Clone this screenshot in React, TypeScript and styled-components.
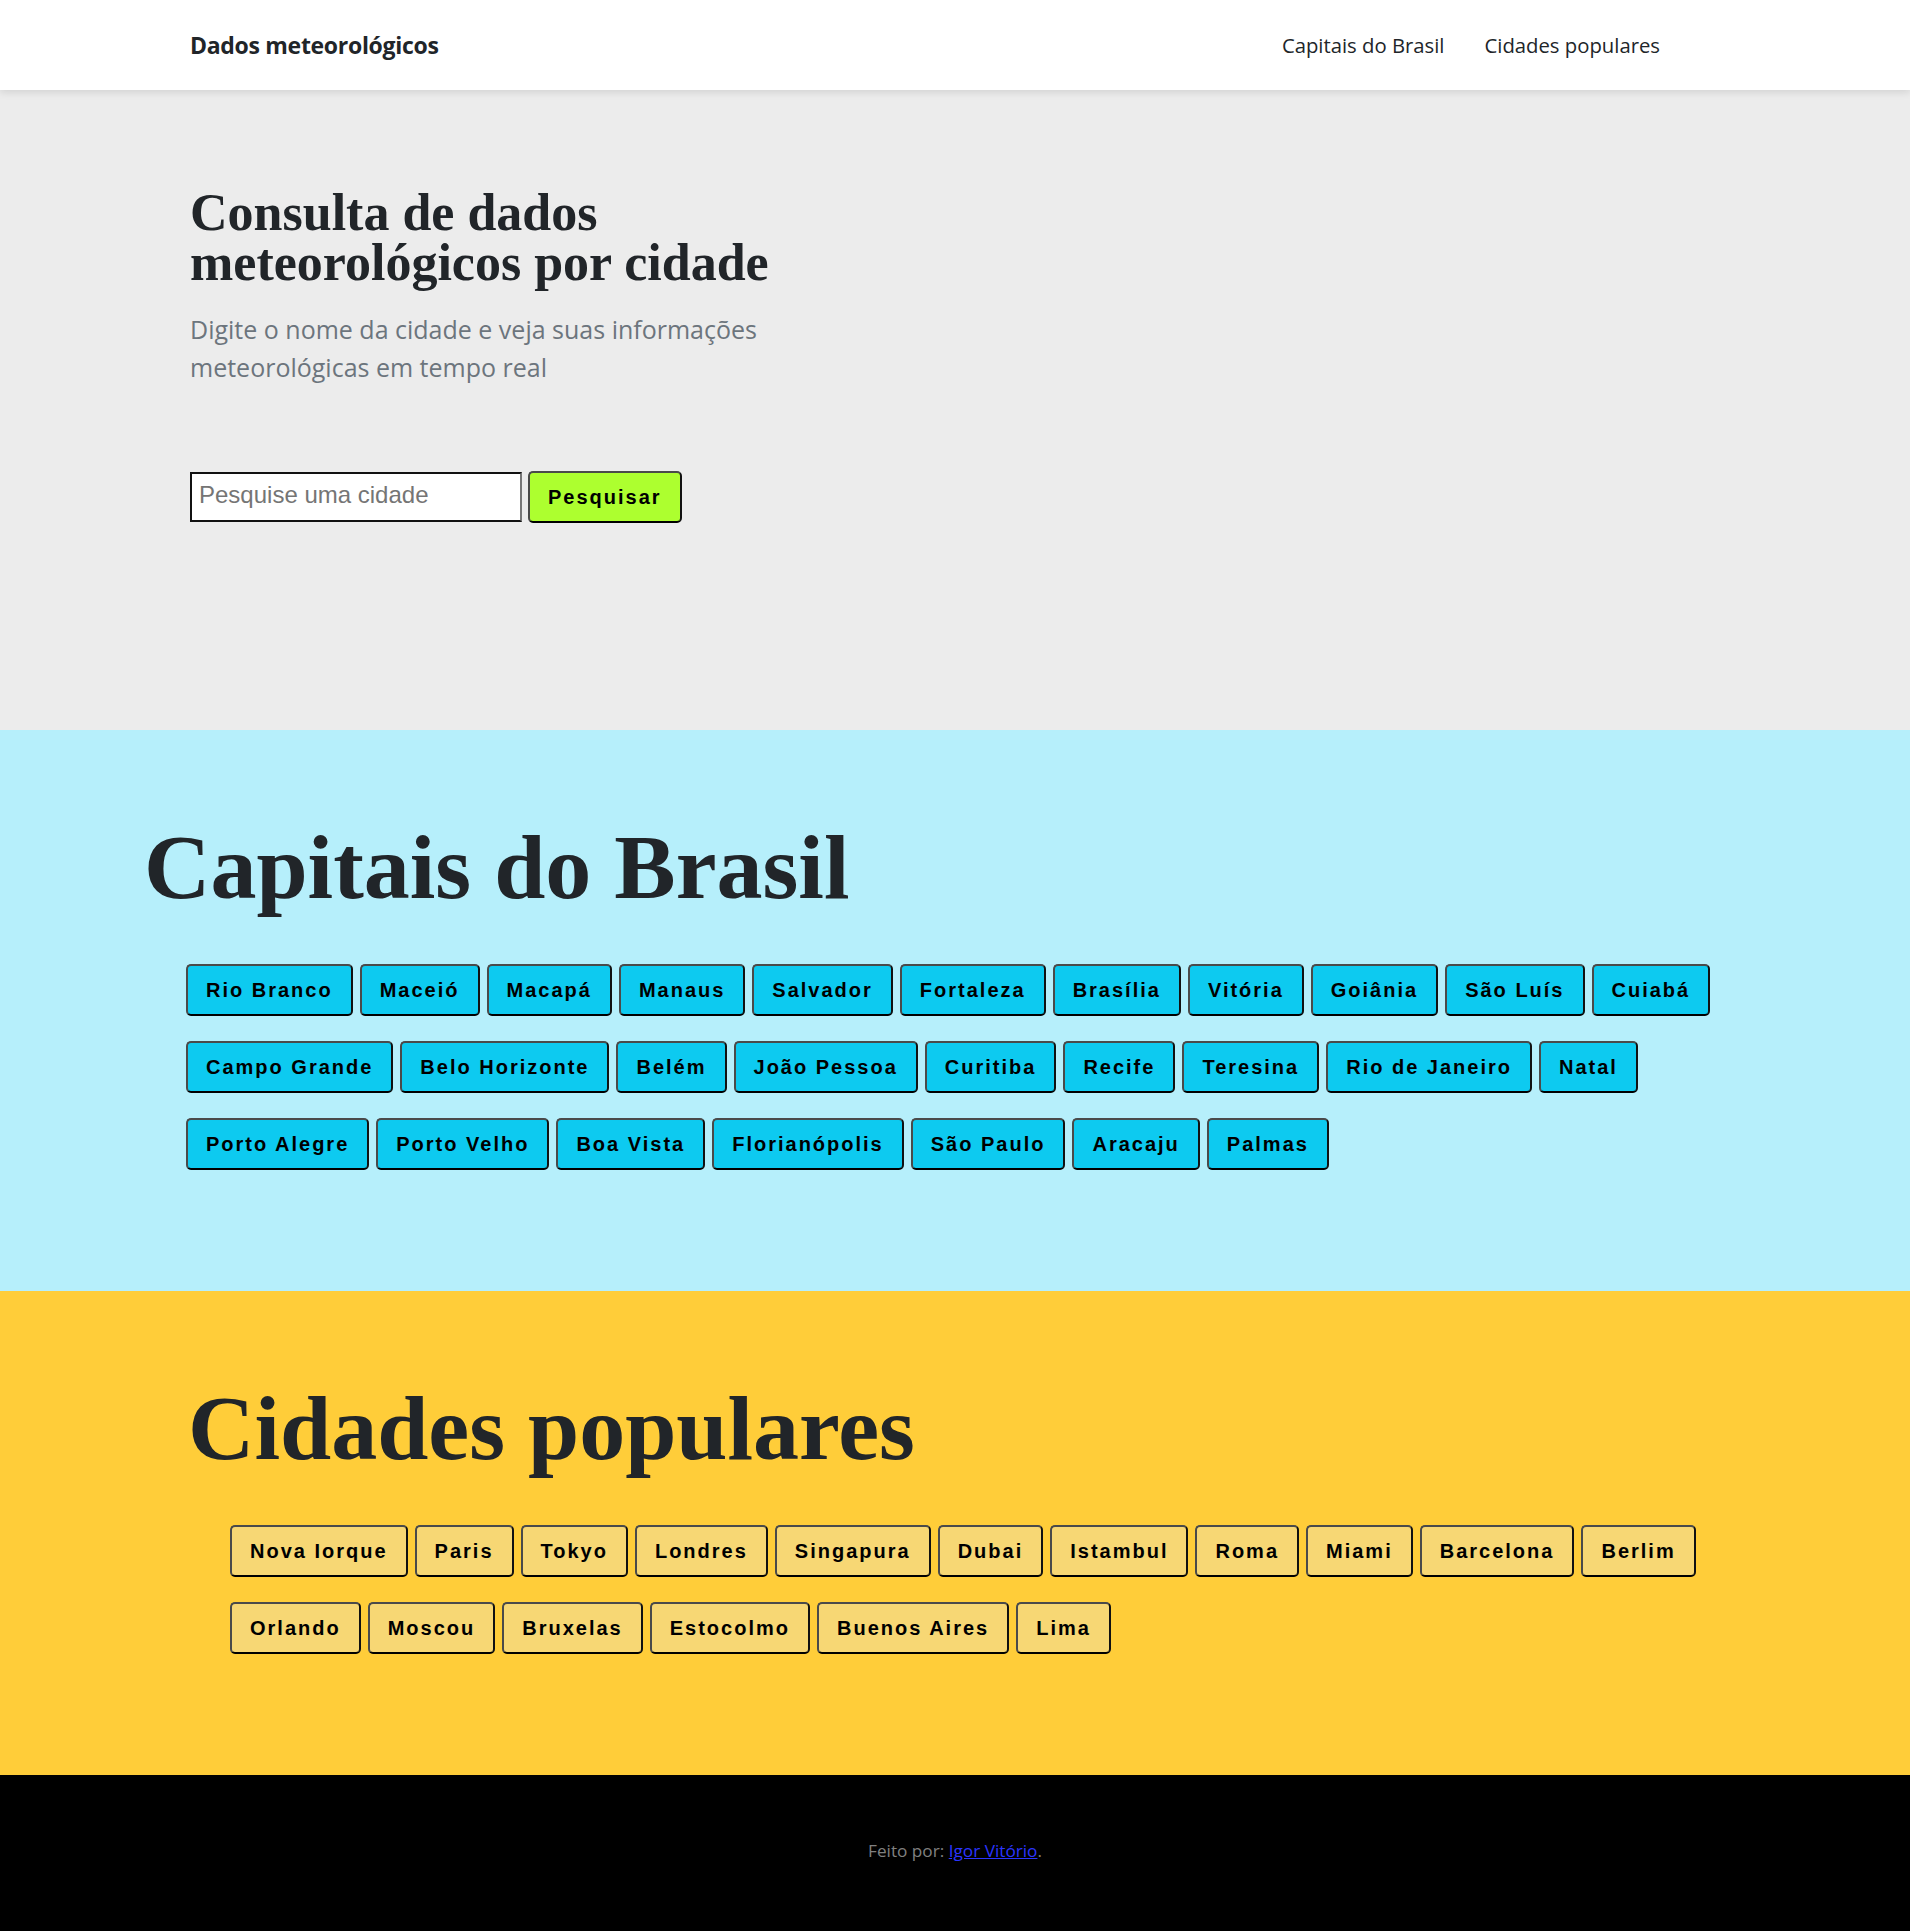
import styled, { createGlobalStyle } from 'styled-components';

const GlobalStyle = createGlobalStyle`
  * {
    box-sizing: border-box;
  }
  body {
    margin: 0;
    font-family: 'Open Sans', 'Noto Sans', sans-serif;
    color: #212529;
    background: #ffffff;
  }
`;

const capitais = [
  'Rio Branco', 'Maceió', 'Macapá', 'Manaus', 'Salvador', 'Fortaleza', 'Brasília', 'Vitória',
  'Goiânia', 'São Luís', 'Cuiabá', 'Campo Grande', 'Belo Horizonte', 'Belém', 'João Pessoa',
  'Curitiba', 'Recife', 'Teresina', 'Rio de Janeiro', 'Natal', 'Porto Alegre', 'Porto Velho',
  'Boa Vista', 'Florianópolis', 'São Paulo', 'Aracaju', 'Palmas',
];

const populares = [
  'Nova Iorque', 'Paris', 'Tokyo', 'Londres', 'Singapura', 'Dubai', 'Istambul', 'Roma', 'Miami',
  'Barcelona', 'Berlim', 'Orlando', 'Moscou', 'Bruxelas', 'Estocolmo', 'Buenos Aires', 'Lima',
];

const Navbar = styled.nav`
  height: 90px;
  background: #ffffff;
  box-shadow: 0 2px 8px rgba(0, 0, 0, 0.12);
  display: flex;
  align-items: center;
  justify-content: space-between;
  padding: 0 250px 0 190px;
  position: relative;
  z-index: 1;
`;

const Brand = styled.a`
  font-size: 23px;
  font-weight: 700;
  color: #212529;
  text-decoration: none;
  letter-spacing: -0.3px;
`;

const NavLinks = styled.div`
  display: flex;
  gap: 40px;
`;

const NavLink = styled.a`
  font-size: 20.3px;
  color: #212529;
  text-decoration: none;
`;

const Hero = styled.header`
  background: #ececec;
  height: 640px;
  padding: 98px 190px 0;
`;

const HeroTitle = styled.h1`
  font-family: 'Liberation Serif', 'Times New Roman', serif;
  font-weight: 700;
  font-size: 52px;
  line-height: 50px;
  margin: 0;
  width: 620px;
`;

const Lead = styled.p`
  font-size: 25px;
  line-height: 38px;
  color: #6c757d;
  margin: 22px 0 0;
  width: 620px;
`;

const SearchRow = styled.form`
  display: flex;
  align-items: center;
  gap: 6px;
  margin-top: 85px;
`;

const SearchInput = styled.input`
  width: 332px;
  height: 50px;
  border: 2px solid;
  border-color: #111 #777 #111 #111;
  background: #ffffff;
  padding: 0 7px 4px;
  font-family: 'Liberation Sans', Arial, sans-serif;
  font-size: 24px;
  &::placeholder {
    color: #757575;
  }
`;

const CityButton = styled.button<{ $bg: string }>`
  font-family: 'Liberation Sans', Arial, sans-serif;
  font-weight: 700;
  font-size: 20px;
  line-height: 24px;
  letter-spacing: 2px;
  padding: 12px 18px;
  color: #000;
  background: ${(p) => p.$bg};
  border: 2px solid;
  border-color: #4a4a4a #111 #000 #4a4a4a;
  border-radius: 5px;
  cursor: pointer;
`;

const Section = styled.section<{ $bg: string; $inset: number }>`
  background: ${(p) => p.$bg};
  padding: 82px ${(p) => p.$inset}px 121px;
`;

const SectionTitle = styled.h2`
  font-family: 'Liberation Serif', 'Times New Roman', serif;
  font-weight: 700;
  font-size: 92px;
  line-height: 110px;
  margin: 0 0 42px;
`;

const ButtonList = styled.div`
  display: flex;
  flex-wrap: wrap;
  gap: 25px 7px;
  margin-left: 42px;
`;

const Footer = styled.footer`
  background: #000;
  height: 156px;
  display: flex;
  align-items: center;
  justify-content: center;
  padding-bottom: 6px;
  font-size: 17.2px;
  color: #808080;
`;

const FooterLink = styled.a`
  color: #2b35ff;
`;

export default function App() {
  return (
    <>
      <GlobalStyle />
      <Navbar>
        <Brand href='#'>Dados meteorológicos</Brand>
        <NavLinks>
          <NavLink href='#capitais'>Capitais do Brasil</NavLink>
          <NavLink href='#populares'>Cidades populares</NavLink>
        </NavLinks>
      </Navbar>
      <Hero>
        <HeroTitle>Consulta de dados meteorológicos por cidade</HeroTitle>
        <Lead>Digite o nome da cidade e veja suas informações meteorológicas em tempo real</Lead>
        <SearchRow onSubmit={(e) => e.preventDefault()}>
          <SearchInput placeholder='Pesquise uma cidade' />
          <CityButton $bg='#adff2f' type='submit'>
            Pesquisar
          </CityButton>
        </SearchRow>
      </Hero>
      <Section id='capitais' $bg='#b6effb' $inset={144}>
        <SectionTitle>Capitais do Brasil</SectionTitle>
        <ButtonList>
          {capitais.map((c) => (
            <CityButton key={c} $bg='#0dcaf0'>
              {c}
            </CityButton>
          ))}
        </ButtonList>
      </Section>
      <Section id='populares' $bg='#ffcd39' $inset={188}>
        <SectionTitle>Cidades populares</SectionTitle>
        <ButtonList>
          {populares.map((c) => (
            <CityButton key={c} $bg='#f7d774'>
              {c}
            </CityButton>
          ))}
        </ButtonList>
      </Section>
      <Footer>
        <span>
          Feito por: <FooterLink href='#'>Igor Vitório</FooterLink>.
        </span>
      </Footer>
    </>
  );
}
